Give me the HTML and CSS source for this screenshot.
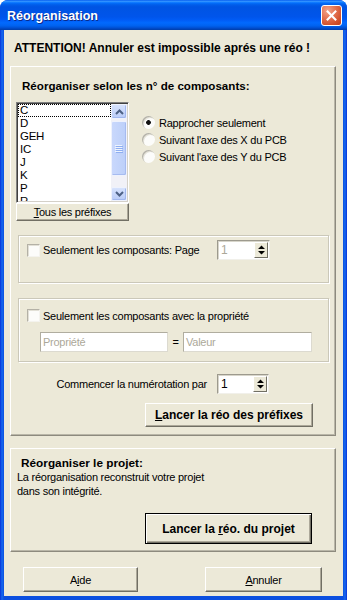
FILE: index.html
```html
<!DOCTYPE html>
<html lang="fr">
<head>
<meta charset="utf-8">
<title>Réorganisation</title>
<link rel="stylesheet" href="styles.css">
</head>
<body>
<div class="window">
  <div class="titlebar">
    <span class="title">Réorganisation</span>
    <span class="close"><svg width="11" height="11" viewBox="0 0 11 11"><path d="M1.6 1.6 L9.4 9.4 M9.4 1.6 L1.6 9.4" stroke="#fff" stroke-width="2.1" stroke-linecap="square" fill="none"/></svg></span>
  </div>
  <div class="client">
    <div class="warning">ATTENTION! Annuler est impossible aprés une réo !</div>

    <div class="panel panel-main">
      <div class="section-title">Réorganiser selon les n° de composants:</div>
      <div class="prefix-row">
        <div class="prefix-col">
          <div class="listbox">
            <div class="items">
              <div class="item focused">C</div>
              <div class="item">D</div>
              <div class="item">GEH</div>
              <div class="item">IC</div>
              <div class="item">J</div>
              <div class="item">K</div>
              <div class="item">P</div>
              <div class="item">R</div>
            </div>
            <div class="scrollbar">
              <div class="sb-btn sb-up"><svg width="9" height="6" viewBox="0 0 9 6"><path d="M1 5 L4.5 1.5 L8 5" stroke="#4d6185" stroke-width="2" fill="none"/></svg></div>
              <div class="sb-thumb"><svg width="8" height="8" viewBox="0 0 8 8"><path d="M0 0.5 H7 M0 2.5 H7 M0 4.5 H7 M0 6.5 H7" stroke="#eef4fe" stroke-width="1"/><path d="M1 1.5 H8 M1 3.5 H8 M1 5.5 H8 M1 7.5 H8" stroke="#8eaef1" stroke-width="1"/></svg></div>
              <div class="sb-track"></div>
              <div class="sb-btn sb-down"><svg width="9" height="6" viewBox="0 0 9 6"><path d="M1 1 L4.5 4.5 L8 1" stroke="#4d6185" stroke-width="2" fill="none"/></svg></div>
            </div>
          </div>
          <button class="btn btn-prefixes"><u>T</u>ous les préfixes</button>
        </div>
        <div class="radios">
          <div class="radio-row"><span class="radio checked"></span>Rapprocher seulement</div>
          <div class="radio-row"><span class="radio"></span>Suivant l'axe des X du PCB</div>
          <div class="radio-row"><span class="radio"></span>Suivant l'axe des Y du PCB</div>
        </div>
      </div>

      <div class="group group-page">
        <div class="page-row">
          <span class="checkbox"></span>
          <span class="label">Seulement les composants: Page</span>
          <div class="spin spin-page">
            <span class="spin-value disabled">1</span>
            <span class="spin-btn"><svg width="7" height="10" viewBox="0 0 7 10"><path d="M3.5 0.5 L7 4 H0 Z M0 6 H7 L3.5 9.5 Z" fill="#000"/></svg></span>
          </div>
        </div>
      </div>

      <div class="group group-prop">
        <div class="check-row">
          <span class="checkbox"></span>
          <span class="label">Seulement les composants avec la propriété</span>
        </div>
        <div class="field-row">
          <span class="field field-prop">Propriété</span>
          <span class="eq">=</span>
          <span class="field field-val">Valeur</span>
        </div>
      </div>

      <div class="start-row">
        <span class="label start-label">Commencer la numérotation par</span>
        <div class="spin spin-start">
          <span class="spin-value">1</span>
          <span class="spin-btn"><svg width="7" height="10" viewBox="0 0 7 10"><path d="M3.5 0.5 L7 4 H0 Z M0 6 H7 L3.5 9.5 Z" fill="#000"/></svg></span>
        </div>
      </div>

      <button class="btn btn-bold btn-run-prefixes"><u>L</u>ancer la réo des préfixes</button>
    </div>

    <div class="panel panel-project">
      <div class="section-title project-title">Réorganiser le projet:</div>
      <div class="desc">La réorganisation reconstruit votre projet<br>dans son intégrité.</div>
      <button class="btn btn-bold btn-default btn-run-project">Lancer la <u>r</u>éo. du projet</button>
    </div>

    <div class="bottom-row">
      <button class="btn btn-help">A<u>i</u>de</button>
      <button class="btn btn-cancel"><u>A</u>nnuler</button>
    </div>
  </div>
</div>
</body>
</html>
```

FILE: styles.css
```css
* { box-sizing: border-box; }

html, body {
  margin: 0;
  padding: 0;
  background: #ffffff;
}

body {
  width: 347px;
  height: 600px;
  font-family: "Liberation Sans", Arial, sans-serif;
  font-size: 11px;
  letter-spacing: -0.25px;
  color: #000;
}

.window {
  width: 347px;
  height: 600px;
  display: flex;
  flex-direction: column;
  background: linear-gradient(to right, #0831d9 0, #166aee 2px, #0b4fe0 4px, #0b4fe0 343px, #166aee 345px, #0831d9 347px);
  border-radius: 8px 8px 0 0;
  overflow: hidden;
}

.titlebar {
  height: 30px;
  flex: none;
  display: flex;
  align-items: center;
  justify-content: space-between;
  padding: 0 5px 0 7px;
  background: linear-gradient(to bottom,
    #0058ee 0%, #3593ff 4%, #288eff 6%, #127dff 8%, #036ffc 10%,
    #0262ee 14%, #0057e5 20%, #0054e3 24%, #0055eb 56%, #005bf5 66%,
    #026afe 76%, #0062ef 86%, #0052d6 92%, #0046c0 96%, #003ea8 100%);
}

.title {
  color: #fff;
  font-weight: bold;
  font-size: 12.5px;
  letter-spacing: 0;
  margin-top: 2px;
  text-shadow: 1px 1px 0 #0a2a8a;
}

.close {
  width: 21px;
  height: 21px;
  margin-top: 1px;
  border: 1px solid #fff;
  border-radius: 3px;
  background: radial-gradient(circle at 30% 25%, #f2a58b 0%, #e47352 40%, #d1502b 75%, #c0401a 100%);
  display: flex;
  align-items: center;
  justify-content: center;
}

.client {
  flex: 1;
  margin: 0 4px 4px;
  background: #ece9d8;
  padding: 11px 0 4px;
  display: flex;
  flex-direction: column;
}

.warning {
  font-weight: bold;
  font-size: 12px;
  letter-spacing: 0;
  line-height: 14px;
  margin-left: 10px;
}

.panel {
  margin: 0 7px 0 6px;
  border: 1px solid;
  border-color: #ffffff #8d8a7e #8d8a7e #ffffff;
  box-shadow: inset -1px -1px 0 #b9b6a8;
}

.panel-main {
  margin-top: 11px;
  padding: 12px 0 8px;
}

.section-title {
  font-weight: bold;
  font-size: 11.6px;
  letter-spacing: 0;
  line-height: 14px;
  margin-left: 11px;
}

.prefix-row {
  display: flex;
  margin-top: 9px;
  margin-left: 5px;
}

.prefix-col {
  width: 113px;
  display: flex;
  flex-direction: column;
}

.listbox {
  height: 101px;
  display: flex;
  padding: 1px;
  background: #fff;
  border: 1px solid;
  border-color: #808080 #ffffff #ffffff #808080;
  box-shadow: inset 1px 1px 0 #404040, inset -1px -1px 0 #d4d0c8;
}

.items {
  flex: 1;
  overflow: hidden;
}

.item {
  height: 13px;
  line-height: 13px;
  padding-left: 2px;
  font-size: 11.5px;
}

.item.focused {
  outline: 1px dotted #000;
  outline-offset: -1px;
}

.scrollbar {
  width: 16px;
  display: flex;
  flex-direction: column;
  background: #f1f1f7;
}

.sb-btn {
  flex: none;
  display: flex;
  align-items: center;
  justify-content: center;
  border: 1px solid #eef2fd;
  border-radius: 2px;
  background: linear-gradient(to bottom, #d6e2fd, #b9cbf7);
  box-shadow: inset -1px -1px 0 #a1b7ee;
}

.sb-up { height: 15px; }
.sb-down { height: 14px; }

.sb-thumb {
  flex: none;
  height: 55px;
  margin-top: 2px;
  display: flex;
  align-items: center;
  justify-content: center;
  border: 1px solid #eef2fd;
  border-radius: 2px;
  background: linear-gradient(to right, #c9d8fc, #bccff9);
  box-shadow: inset -1px -1px 0 #a6bbf0;
}

.sb-track { flex: 1; }

.btn {
  font-family: "Liberation Sans", Arial, sans-serif;
  font-size: 11px;
  letter-spacing: -0.25px;
  color: #000;
  background: #ece9d8;
  border: 1px solid;
  border-color: #ffffff #716f64 #716f64 #ffffff;
  box-shadow: inset -1px -1px 0 #aca899;
  padding: 0;
  margin: 0;
}

.btn-prefixes {
  width: 113px;
  height: 18px;
}

.btn-bold {
  font-weight: bold;
  font-size: 12px;
  letter-spacing: 0;
}

.btn-default {
  border: 1px solid #000;
  box-shadow: inset 1px 1px 0 #fff, inset -1px -1px 0 #716f64, inset -2px -2px 0 #aca899;
}

.radios {
  display: flex;
  flex-direction: column;
  margin-left: 13px;
  margin-top: 12px;
}

.radio-row {
  height: 17px;
  display: flex;
  align-items: center;
}

.radio {
  width: 13px;
  height: 13px;
  flex: none;
  margin-right: 4px;
  border-radius: 50%;
  background: #fcfcfa;
  box-shadow: inset 1px 1px 0 #b4b2a8, inset 2px 2px 0 #e4e2d9;
}

.radio.checked {
  background: radial-gradient(circle at 50% 50%, #111 0, #111 2px, #fcfcfa 2.7px);
}

.group {
  margin: 0 6px 0 7px;
  border: 1px solid #cbc8b9;
  box-shadow: inset 1px 1px 0 #fff, 1px 1px 0 #fff;
}

.group-page {
  margin-top: 14px;
  height: 48px;
  padding: 4px 0 0 8px;
}

.page-row {
  display: flex;
  align-items: center;
  height: 20px;
}

.checkbox {
  width: 13px;
  height: 13px;
  flex: none;
  margin-right: 3px;
  background: #fcfcfa;
  border: 1px solid;
  border-color: #b4b1a6 #f4f3ee #f4f3ee #b4b1a6;
  box-shadow: inset 1px 1px 0 #e2e0d6;
}

.spin {
  height: 20px;
  display: flex;
  background: #fff;
  border: 1px solid;
  border-color: #9d9a8e #f1f0ea #f1f0ea #9d9a8e;
  box-shadow: inset 1px 1px 0 #d8d6cb;
}

.spin-page {
  width: 53px;
  margin-left: auto;
  margin-right: 58px;
}

.spin-value {
  flex: 1;
  padding-left: 3px;
  line-height: 18px;
  font-size: 12px;
}

.spin-value.disabled { color: #aca899; }

.spin-btn {
  width: 14px;
  margin: 1px 1px 1px 0;
  display: flex;
  align-items: center;
  justify-content: center;
  background: #ece9d8;
  border: 1px solid;
  border-color: #ffffff #716f64 #716f64 #ffffff;
}

.group-prop {
  margin-top: 15px;
  height: 64px;
  padding: 10px 0 0;
}

.check-row {
  display: flex;
  align-items: center;
  height: 13px;
  padding-left: 8px;
}

.field-row {
  display: flex;
  height: 20px;
  margin-top: 10px;
  padding-left: 21px;
}

.field {
  height: 20px;
  line-height: 18px;
  padding-left: 2px;
  color: #aca899;
  background: #fff;
  border: 1px solid;
  border-color: #b0ad9f #dcdad0 #dcdad0 #b0ad9f;
}

.field-prop { width: 128px; }
.field-val { width: 129px; }

.eq {
  width: 15px;
  text-align: center;
  line-height: 20px;
}

.start-row {
  display: flex;
  justify-content: flex-end;
  align-items: center;
  height: 20px;
  margin-top: 12px;
  padding-right: 66px;
}

.start-label { margin-right: 10px; }

.spin-start { width: 52px; }

.btn-run-prefixes {
  display: block;
  width: 168px;
  height: 24px;
  margin: 9px 22px 0 auto;
}

.panel-project {
  margin-top: 12px;
  padding: 7px 0 7px;
}

.project-title {
  margin-left: 10px;
  font-size: 11.8px;
}

.desc {
  margin-left: 6px;
  line-height: 14px;
}

.btn-run-project {
  display: block;
  width: 167px;
  height: 31px;
  margin: 15px 23px 0 auto;
}

.bottom-row {
  display: flex;
  justify-content: space-between;
  margin-top: 15px;
  padding: 0 21px 0 19px;
}

.btn-help { width: 115px; height: 25px; }
.btn-cancel { width: 117px; height: 25px; }
```
